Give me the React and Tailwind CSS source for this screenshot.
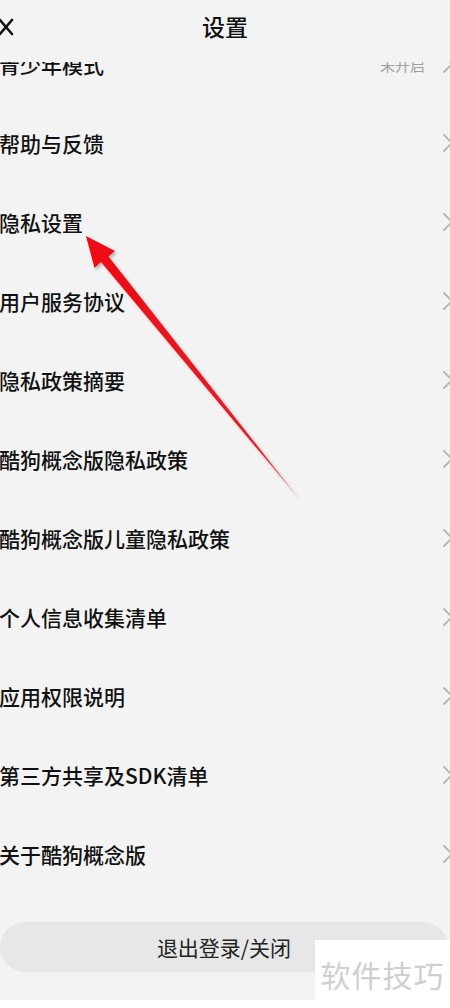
const items = [
  { label: "青少年模式", value: "未开启" },
  { label: "帮助与反馈" },
  { label: "隐私设置" },
  { label: "用户服务协议" },
  { label: "隐私政策摘要" },
  { label: "酷狗概念版隐私政策" },
  { label: "酷狗概念版儿童隐私政策" },
  { label: "个人信息收集清单" },
  { label: "应用权限说明" },
  { label: "第三方共享及SDK清单" },
  { label: "关于酷狗概念版" },
];

const Chevron = () => (
  <svg width="10" height="18" viewBox="0 0 10 18" className="shrink-0 -mr-[3px]">
    <polyline points="1,1 9,9 1,17" fill="none" stroke="#b4b4b4" strokeWidth="1.8" strokeLinecap="round" strokeLinejoin="round" />
  </svg>
);

const Arrow = () => (
  <svg width="450" height="1008" className="absolute left-0 top-0 pointer-events-none">
    <defs>
      <linearGradient id="shaft" x1="87" y1="237" x2="300" y2="500" gradientUnits="userSpaceOnUse">
        <stop offset="0" stopColor="#ee0a12" />
        <stop offset="0.8" stopColor="#e3202a" />
        <stop offset="1" stopColor="#e89a9c" />
      </linearGradient>
      <filter id="shadow" x="-20%" y="-20%" width="140%" height="140%">
        <feDropShadow dx="2" dy="2" stdDeviation="1.5" floodColor="#000" floodOpacity="0.25" />
      </filter>
    </defs>
    <polygon
      points="86,236 115,251 108.5,256.5 300,500 101,262 94.5,268"
      fill="url(#shaft)"
      filter="url(#shadow)"
    />
  </svg>
);

export default function App() {
  return (
    <div
      className="relative w-[450px] h-[1008px] overflow-hidden bg-[#f3f3f3] flex flex-col text-[#111]"
      style={{ fontFamily: '"Noto Sans CJK SC", "Noto Sans", sans-serif' }}
    >
      <div className="relative z-10 h-[62px] shrink-0 bg-[#f3f3f3] flex items-center justify-center">
        <svg width="14" height="18" viewBox="0 0 14 18" className="absolute left-0 top-[18px]">
          <line x1="0" y1="2" x2="12" y2="16" stroke="#111" strokeWidth="2.6" strokeLinecap="round" />
          <line x1="12" y1="2" x2="0" y2="16" stroke="#111" strokeWidth="2.6" strokeLinecap="round" />
        </svg>
        <span className="text-[23px] font-medium leading-none -mt-[9px]">设置</span>
      </div>

      <div className="-mt-[37.5px] flex flex-col">
        {items.map((it) => (
          <div key={it.label} className="h-[79px] flex items-center justify-between">
            <span className="text-[21px] font-medium leading-none -ml-[1px]">{it.label}</span>
            <div className="flex items-center gap-[18px]">
              {it.value && <span className="text-[15px] text-[#a0a0a0] leading-none">{it.value}</span>}
              <Chevron />
            </div>
          </div>
        ))}
      </div>

      <div className="mt-[28.5px] h-[50px] shrink-0 rounded-full bg-[#e7e7e7] flex items-center justify-center mr-[2px]">
        <span className="text-[21px] leading-none text-[#222]">退出登录/关闭</span>
      </div>

      <div className="flex-1" />
      <div className="h-[8px] shrink-0 bg-white" />

      <div className="absolute right-0 bottom-0 w-[135px] h-[68px] bg-white flex items-center justify-center">
        <span className="text-[30px] leading-none text-[#cfcfcf] tracking-[1px]">软件技巧</span>
      </div>

      <Arrow />
    </div>
  );
}
